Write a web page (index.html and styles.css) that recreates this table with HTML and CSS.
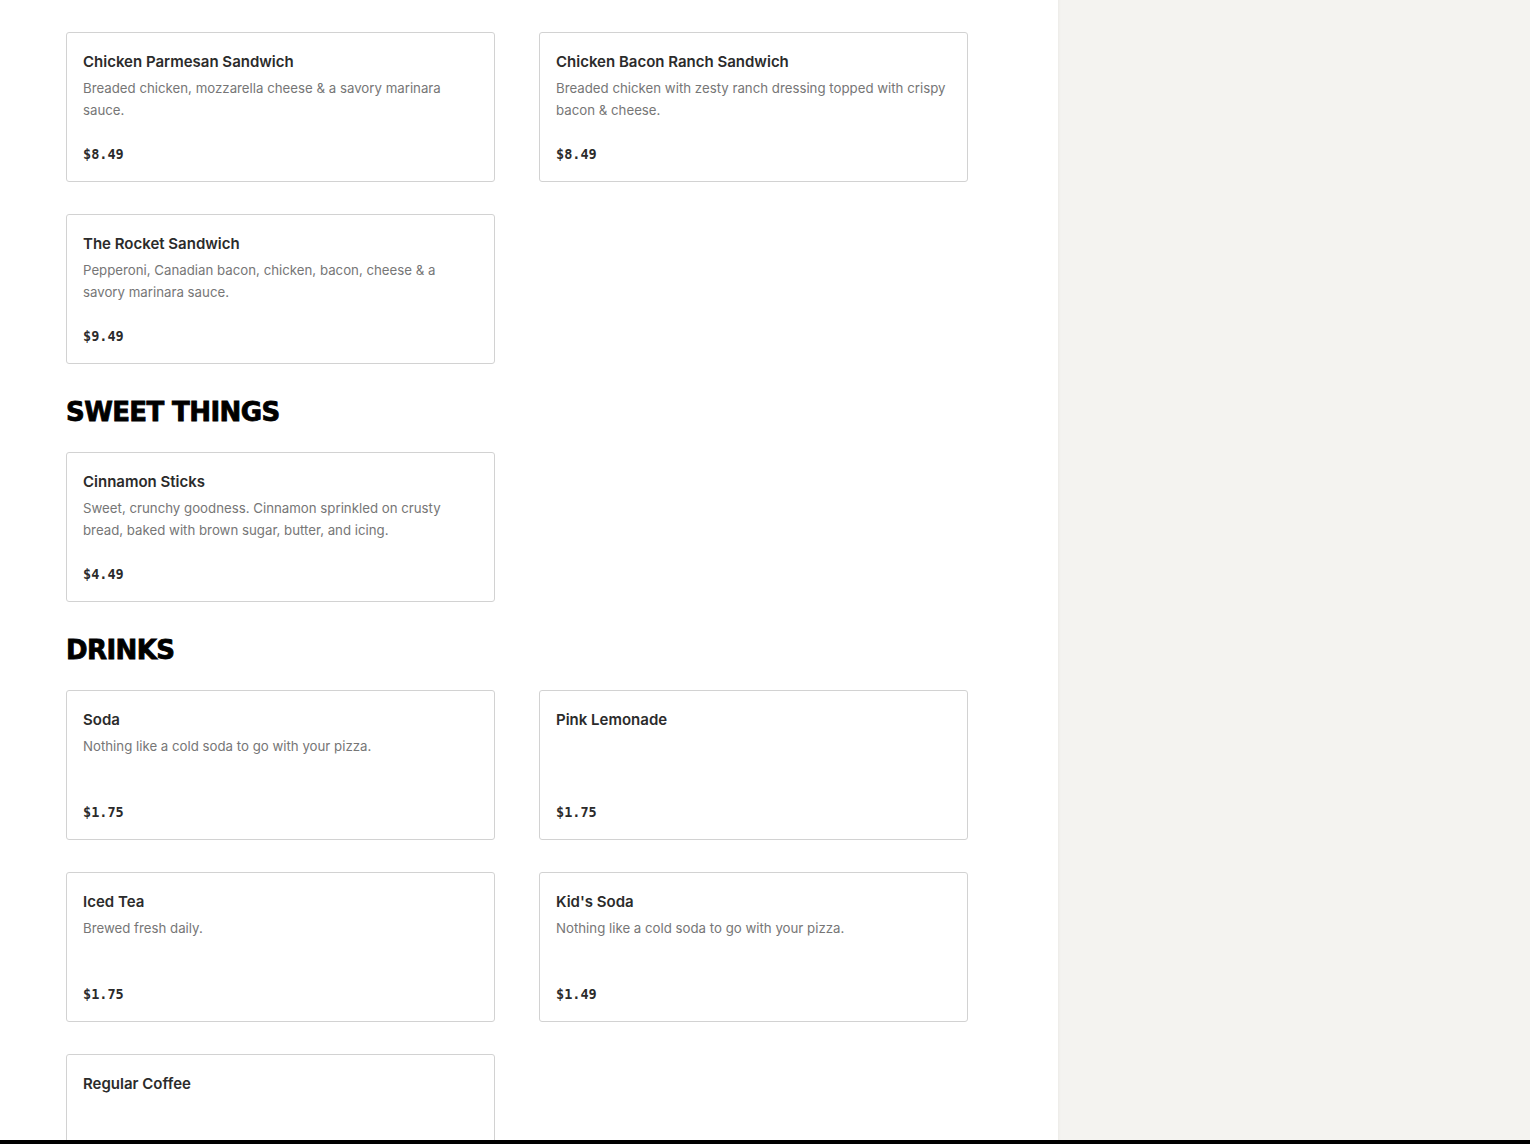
FILE: index.html
```html
<!DOCTYPE html>
<html>
<head>
  <title>Menu</title>
  <link rel="stylesheet" href="styles.css">
</head>
<body>
  <div class="page">
    <div class="menu">
      <div class="item-grid">
        <div class="item">
          <div class="item-name">Chicken Parmesan Sandwich</div>
          <div class="item-desc">Breaded chicken, mozzarella cheese &amp; a savory marinara sauce.</div>
          <div class="item-price">$8.49</div>
        </div>
        <div class="item">
          <div class="item-name">Chicken Bacon Ranch Sandwich</div>
          <div class="item-desc">Breaded chicken with zesty ranch dressing topped with crispy bacon &amp; cheese.</div>
          <div class="item-price">$8.49</div>
        </div>
        <div class="item">
          <div class="item-name">The Rocket Sandwich</div>
          <div class="item-desc">Pepperoni, Canadian bacon, chicken, bacon, cheese &amp; a savory marinara sauce.</div>
          <div class="item-price">$9.49</div>
        </div>
      </div>

      <h2 class="section-title">SWEET THINGS</h2>
      <div class="item-grid">
        <div class="item">
          <div class="item-name">Cinnamon Sticks</div>
          <div class="item-desc">Sweet, crunchy goodness. Cinnamon sprinkled on crusty bread, baked with brown sugar, butter, and icing.</div>
          <div class="item-price">$4.49</div>
        </div>
      </div>

      <h2 class="section-title">DRINKS</h2>
      <div class="item-grid">
        <div class="item">
          <div class="item-name">Soda</div>
          <div class="item-desc">Nothing like a cold soda to go with your pizza.</div>
          <div class="item-price">$1.75</div>
        </div>
        <div class="item">
          <div class="item-name">Pink Lemonade</div>
          <div class="item-price">$1.75</div>
        </div>
        <div class="item">
          <div class="item-name">Iced Tea</div>
          <div class="item-desc">Brewed fresh daily.</div>
          <div class="item-price">$1.75</div>
        </div>
        <div class="item">
          <div class="item-name">Kid's Soda</div>
          <div class="item-desc">Nothing like a cold soda to go with your pizza.</div>
          <div class="item-price">$1.49</div>
        </div>
        <div class="item">
          <div class="item-name">Regular Coffee</div>
          <div class="item-price">$1.49</div>
        </div>
      </div>
    </div>
    <div class="sidebar"></div>
  </div>
  <div class="bottom-bar"></div>
</body>
</html>
```

FILE: styles.css
```css
/* menu page */
body {
  margin: 0;
  background-color: #ffffff;
  font-family: "Inter", "Liberation Sans", sans-serif;
  color: #2d2d2d;
}

.page {
  display: flex;
  min-height: 100vh;
}

.menu {
  width: 1058px;
  box-sizing: border-box;
  padding: 32px 90px 40px 66px;
}

.sidebar {
  flex: 1;
  background-color: #f4f3f0;
  box-shadow: inset 3px 0 3px -2px rgba(0, 0, 0, 0.04);
}

.item-grid {
  display: grid;
  grid-template-columns: 429px 429px;
  column-gap: 44px;
  row-gap: 32px;
}

.item {
  display: flex;
  flex-direction: column;
  box-sizing: border-box;
  height: 150px;
  padding: 17px 14px 15px 16px;
  border: 1px solid #d2d2d2;
  border-radius: 3px;
}

.item-name {
  font-size: 15px;
  font-weight: 600;
  line-height: 24px;
  color: #2b2b2b;
}

.item-desc {
  margin-top: 3px;
  font-size: 13.25px;
  line-height: 22px;
  color: #767676;
}

.item-price {
  margin-top: auto;
  font-family: "DejaVu Sans Mono", "Liberation Mono", monospace;
  font-size: 13.5px;
  font-weight: bold;
  line-height: 24px;
  color: #2b2b2b;
}

.section-title {
  margin: 32px 0 24px 0;
  font-family: "DejaVu Sans", "Liberation Sans", sans-serif;
  font-size: 26px;
  font-weight: bold;
  line-height: 32px;
  letter-spacing: -0.6px;
  -webkit-text-stroke: 0.8px #000000;
  color: #000000;
}

.bottom-bar {
  position: fixed;
  left: 0;
  right: 0;
  bottom: 0;
  height: 4px;
  background-color: #000000;
}
```
